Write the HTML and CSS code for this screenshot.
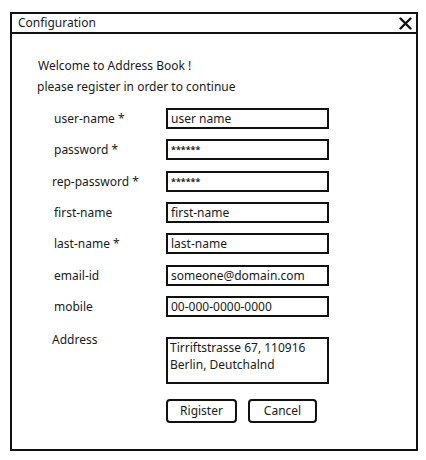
FILE: index.html
```html
<!DOCTYPE html>
<html>
<head>
<meta charset="utf-8">
<link rel="stylesheet" href="styles.css">
</head>
<body>
<div class="window">
  <div class="titlebar">
    <span class="title">Configuration</span>
    <svg class="close" width="13" height="13" viewBox="0 0 13 13"><path d="M1.5 1.5 L11.5 11.5 M11.5 1.5 L1.5 11.5" stroke="#111" stroke-width="2.4" stroke-linecap="round" fill="none"/></svg>
  </div>
  <div class="content">
    <div class="intro">
      <p class="welcome">Welcome to Address Book !</p>
      <p class="please">please register in order to continue</p>
    </div>
    <div class="form">
      <label class="lbl">user-name *</label><div class="field">user name</div>
      <label class="lbl">password *</label><div class="field stars">******</div>
      <label class="lbl shift">rep-password *</label><div class="field stars">******</div>
      <label class="lbl">first-name</label><div class="field">first-name</div>
      <label class="lbl">last-name *</label><div class="field">last-name</div>
      <label class="lbl">email-id</label><div class="field">someone@domain.com</div>
      <label class="lbl">mobile</label><div class="field">00-000-0000-0000</div>
      <label class="lbl addr">Address</label><div class="field area">Tirriftstrasse 67, 110916<br>Berlin, Deutchalnd</div>
      <div class="spacer"></div>
      <div class="buttons"><button class="btn reg">Rigister</button><button class="btn cancel">Cancel</button></div>
    </div>
  </div>
</div>
</body>
</html>
```
FILE: styles.css
```css
html, body { margin: 0; padding: 0; background: #fff; }
body {
  font-family: "Noto Sans", "Open Sans", sans-serif;
  font-size: 12px;
  color: #1a1a1a;
}
.window {
  margin: 12px 0 0 10px;
  width: 408px;
  height: 439px;
  box-sizing: border-box;
  border: 2px solid #111;
  display: flex;
  flex-direction: column;
}
.titlebar {
  height: 18px;
  border-bottom: 2px solid #111;
  display: flex;
  align-items: center;
  justify-content: space-between;
  padding: 0 4px 0 6px;
  flex: none;
}
.title { line-height: 16px; }
.close { display: block; }
.content {
  padding: 21px 0 0 26px;
}
.intro p { margin: 0; line-height: 21px; }
.please { margin-left: -1px !important; }
.form {
  margin-top: 11px;
  margin-left: 14px;
  display: grid;
  grid-template-columns: 114px 163px;
  row-gap: 10.34px;
  align-items: center;
}
.lbl { display: block; padding-left: 2px; }
.lbl.shift { padding-left: 0; }
.field {
  box-sizing: border-box;
  height: 21px;
  border: 2px solid #111;
  padding: 0 3px;
  line-height: 17px;
  white-space: nowrap;
}
.stars { font-size: 9px; font-weight: bold; color: #222; }
.lbl.addr { align-self: start; margin-top: 4px; padding-left: 0; }
.field.area {
  height: 47px;
  margin-top: 10px;
  align-self: start;
  padding: 1px 2px;
  line-height: 16.4px;
}
.buttons {
  display: flex;
  gap: 11px;
  margin-top: 4px;
}
.btn {
  font-family: inherit;
  font-size: 12px;
  color: #1a1a1a;
  background: #fff;
  border: 2px solid #111;
  border-radius: 4px;
  height: 24px;
  padding: 0;
  box-sizing: border-box;
}
.reg { width: 71px; }
.cancel { width: 69px; }
```
